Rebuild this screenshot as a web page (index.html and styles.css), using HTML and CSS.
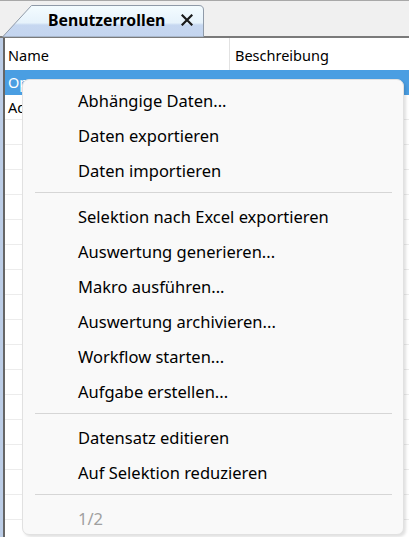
FILE: index.html
```html
<!DOCTYPE html>
<html>
<head>
    <meta charset="utf-8">
    <title>Benutzerrollen</title>
    <link rel="stylesheet" href="styles.css">
</head>
<body>
    <div class="window">
        <div class="tabstrip">
            <div class="tab">
                <!-- Reiterform mit schräger linker Kante -->
                <svg class="tab-shape" width="202" height="32" viewBox="0 0 202 32">
                    <defs>
                        <linearGradient id="tabFill" x1="0" y1="0" x2="0" y2="1">
                            <stop offset="0" stop-color="#f4fcff"/>
                            <stop offset="0.55" stop-color="#e6f2fb"/>
                            <stop offset="0.62" stop-color="#c6d7f0"/>
                            <stop offset="1" stop-color="#c4d5ef"/>
                        </linearGradient>
                    </defs>
                    <path d="M0.5 32 L29.5 0.5 L197 0.5 Q201.5 0.5 201.5 5 L201.5 32 Z" fill="url(#tabFill)" stroke="#8f9aa8" stroke-width="1"/>
                </svg>
                <span class="tab-title">Benutzerrollen</span>
                <svg class="tab-close" width="12" height="12" viewBox="0 0 12 12">
                    <path d="M1.5 1.5 L10.5 10.5 M10.5 1.5 L1.5 10.5" stroke="#1a1a1a" stroke-width="2.2" stroke-linecap="square"/>
                </svg>
            </div>
        </div>

        <div class="panel">
            <div class="grid">
                <div class="row head">
                    <div class="cell col-name">Name</div>
                    <div class="cell col-desc">Beschreibung</div>
                </div>
                <div class="row selected"><div class="cell col-name">Opera</div><div class="cell col-desc"></div></div>
                <div class="row"><div class="cell col-name">Admin</div><div class="cell col-desc"></div></div>
                <div class="row"><div class="cell col-name"></div><div class="cell col-desc"></div></div>
                <div class="row"><div class="cell col-name"></div><div class="cell col-desc"></div></div>
                <div class="row"><div class="cell col-name"></div><div class="cell col-desc"></div></div>
                <div class="row"><div class="cell col-name"></div><div class="cell col-desc"></div></div>
                <div class="row"><div class="cell col-name"></div><div class="cell col-desc"></div></div>
                <div class="row"><div class="cell col-name"></div><div class="cell col-desc"></div></div>
                <div class="row"><div class="cell col-name"></div><div class="cell col-desc"></div></div>
                <div class="row"><div class="cell col-name"></div><div class="cell col-desc"></div></div>
                <div class="row"><div class="cell col-name"></div><div class="cell col-desc"></div></div>
                <div class="row"><div class="cell col-name"></div><div class="cell col-desc"></div></div>
                <div class="row"><div class="cell col-name"></div><div class="cell col-desc"></div></div>
                <div class="row"><div class="cell col-name"></div><div class="cell col-desc"></div></div>
                <div class="row"><div class="cell col-name"></div><div class="cell col-desc"></div></div>
                <div class="row"><div class="cell col-name"></div><div class="cell col-desc"></div></div>
                <div class="row"><div class="cell col-name"></div><div class="cell col-desc"></div></div>
                <div class="row"><div class="cell col-name"></div><div class="cell col-desc"></div></div>
                <div class="row"><div class="cell col-name"></div><div class="cell col-desc"></div></div>
            </div>
        </div>

        <!-- Kontextmenü der Tabelle -->
        <div class="menu">
            <div class="menu-item">Abhängige Daten...</div>
            <div class="menu-item">Daten exportieren</div>
            <div class="menu-item">Daten importieren</div>
            <div class="menu-sep"></div>
            <div class="menu-item">Selektion nach Excel exportieren</div>
            <div class="menu-item">Auswertung generieren...</div>
            <div class="menu-item">Makro ausführen...</div>
            <div class="menu-item">Auswertung archivieren...</div>
            <div class="menu-item">Workflow starten...</div>
            <div class="menu-item">Aufgabe erstellen...</div>
            <div class="menu-sep"></div>
            <div class="menu-item">Datensatz editieren</div>
            <div class="menu-item">Auf Selektion reduzieren</div>
            <div class="menu-sep"></div>
            <div class="menu-item disabled">1/2</div>
        </div>
    </div>
</body>
</html>
```

FILE: styles.css
```css
html, body {
    margin: 0;
    padding: 0;
    overflow: hidden;
}
body {
    font-family: "Noto Sans", "Open Sans", sans-serif;
    background: #f0f0f0;
    color: #000;
}
.window {
    position: relative;
    width: 409px;
    height: 537px;
    overflow: hidden;
}

/* Reiterleiste */
.tabstrip {
    background: #f0f0f0;
    border-top: 1px solid #a8a8a8;
    border-bottom: 2px solid #7a7a7a;
    box-sizing: border-box;
    height: 38px;
    display: flex;
    align-items: flex-end;
    padding-left: 2px;
}
.tab {
    position: relative;
    width: 202px;
    height: 32px;
    display: flex;
    align-items: center;
    margin-bottom: -1px;
}
.tab-shape {
    position: absolute;
    left: 0;
    top: 0;
}
.tab-title {
    position: relative;
    margin-left: 46px;
    margin-top: -2px;
    font-weight: bold;
    font-size: 15.8px;
}
.tab-close {
    position: relative;
    margin-left: 16px;
    margin-top: -2px;
}

/* Tabelle */
.panel {
    border-left: 3px solid #bccde6;
    height: 100%;
}
.grid {
    border-left: 2px solid #666;
    background: #fff;
    height: 100%;
}
.row {
    display: flex;
    height: 25px;
    border-bottom: 1px solid #ececec;
    box-sizing: border-box;
    font-size: 14.5px;
    line-height: 24px;
}
.row.head {
    height: 32px;
    line-height: 34px;
    border-bottom: none;
}
.row.selected {
    background: #4a9ee2;
    color: #fff;
    border-bottom: none;
}
.cell {
    white-space: nowrap;
    overflow: hidden;
    padding-left: 3px;
    box-sizing: border-box;
}
.col-name {
    width: 225px;
}
.row.head .col-name {
    border-right: 1px solid #e2e2e2;
}
.col-desc {
    flex: 1;
    padding-left: 5px;
}

/* Kontextmenü */
.menu {
    position: absolute;
    left: 22px;
    top: 79px;
    width: 382px;
    height: 456px;
    box-sizing: border-box;
    padding-top: 3px;
    background: #f9f9f9;
    border: 1px solid #e1e1e1;
    border-radius: 7px;
    box-shadow: 2px 2px 3px rgba(0, 0, 0, 0.12);
}
.menu-item {
    height: 35px;
    line-height: 35px;
    padding-left: 55px;
    font-size: 16.5px;
    white-space: nowrap;
}
.menu-item.disabled {
    color: #a0a0a0;
}
.menu-sep {
    height: 1px;
    background: #d6d6d6;
    margin: 4px 11px 6px 12px;
}
```
